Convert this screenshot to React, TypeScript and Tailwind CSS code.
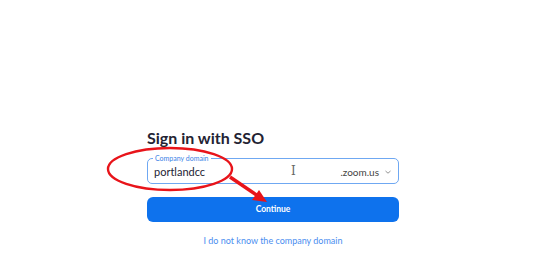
import React from "react";

const App = () => {
  return (
    <div className="relative w-[550px] h-[264px] bg-white overflow-hidden" style={{ fontFamily: "Lato, 'Liberation Sans', sans-serif" }}>
      <div className="ml-[147px] w-[252px] pt-[128px] flex flex-col">
        <h1 className="text-[16px] leading-[20px] font-bold text-[#232333]">Sign in with SSO</h1>
        <div className="relative mt-[10px] h-[26px] rounded-[5px] border border-[#6fa8f2] flex items-center pl-[6px] pr-[6px]">
          <span className="absolute -top-[6px] left-[5px] bg-white px-[2px] text-[7px] leading-[10px] text-[#3b82e6]">
            Company domain
          </span>
          <span className="text-[11px] text-[#232333] pt-[2px]">portlandcc</span>
          <span className="ml-auto text-[10px] text-[#444] pt-[2px]">.zoom.us</span>
          <svg width="8" height="8" viewBox="0 0 8 8" className="ml-[5px] mt-[2px]">
            <path d="M1.5 3 L4 5.2 L6.5 3" fill="none" stroke="#888" strokeWidth="0.9" />
          </svg>
          <span className="absolute left-[143px] top-[5px] text-[12px] leading-[14px] text-[#666] font-light" style={{ fontFamily: "'DejaVu Serif', serif" }}>
            I
          </span>
        </div>
        <button className="mt-[13px] h-[25px] rounded-[6px] bg-[#0e72ed] text-white text-[8.5px] font-bold">
          Continue
        </button>
        <div className="mt-[12px] text-center text-[9px] text-[#4a8ef0]">I do not know the company domain</div>
      </div>
      <svg className="absolute inset-0 pointer-events-none" width="550" height="264" viewBox="0 0 550 264">
        <ellipse cx="170" cy="169" rx="62" ry="21" fill="none" stroke="#e8141a" strokeWidth="2.4" />
        <line x1="230" y1="177" x2="258" y2="196" stroke="#e8141a" strokeWidth="3.5" />
        <polygon points="267,202 252,200 259,190" fill="#e8141a" />
      </svg>
    </div>
  );
};

export default App;
